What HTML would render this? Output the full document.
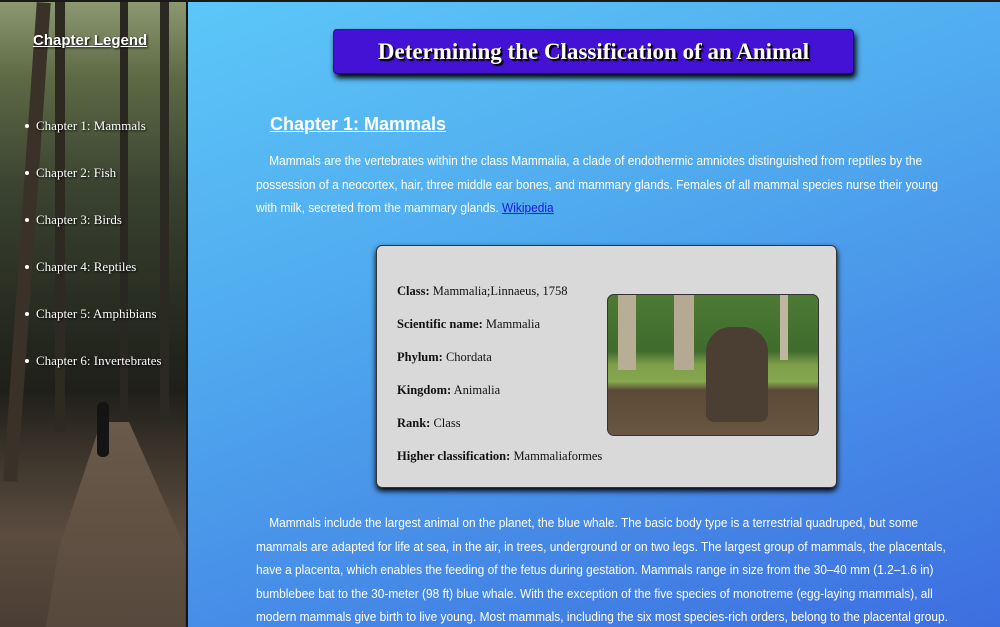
<!DOCTYPE html>
<html><head><meta charset="utf-8">
<style>
*{margin:0;padding:0;box-sizing:border-box}
html,body{width:1000px;height:627px;overflow:hidden}
body{background:linear-gradient(160deg,#5fcdfa 0%,#4fa8ee 45%,#3d6ee0 100%);font-family:"Liberation Sans",sans-serif;position:relative;border-top:2px solid #1a1a1a}
#side{position:absolute;left:0;top:0;width:188px;height:627px;border-right:2px solid #151515;overflow:hidden;
background:linear-gradient(180deg,#8c9870 0%,#5d6a45 12%,#3a4230 30%,#272b20 50%,#1f1f19 62%,#3c342b 72%,#5b4c3f 85%,#4a3d33 100%);}
.tr{position:absolute;top:0;background:#2a2520}
#side h3{position:absolute;left:33px;top:30px;color:#fff;font:bold 15px "Liberation Sans",sans-serif;text-decoration:underline;text-shadow:1px 1px 2px #000}
#side ul{position:absolute;left:24px;top:116px;list-style:none;color:#fff;font:13px "Liberation Serif",serif;text-shadow:1px 1px 2px #000}
#side li{height:47px;padding-left:12px;position:relative}
#side li:before{content:"";position:absolute;left:1px;top:6px;width:4px;height:4px;border-radius:50%;background:#fff}
#title{position:absolute;left:333px;top:27px;width:521px;height:45px;background:#4412d4;border:1px solid #22106a;border-radius:4px;box-shadow:2px 4px 6px #000;color:#fff;text-align:center;font:bold 23px/43px "Liberation Serif",serif;text-shadow:1px 1px 0 #000,2px 2px 1px #000}
h2{position:absolute;left:270px;top:112px;color:#fff;font:bold 18px "Liberation Sans",sans-serif;text-decoration:underline}
.p{position:absolute;left:256px;color:#fff;font-size:12.6px;line-height:23.5px;white-space:nowrap;transform:scaleX(0.945);transform-origin:0 0}
.p a{color:#1a1ae0}
#card{position:absolute;left:376px;top:243px;width:461px;height:243px;background:#d9d9d9;border:1px solid #333;border-radius:6px;box-shadow:0 3px 6px #000}
#card .t{position:absolute;left:20px;top:29px;font:12.5px "Liberation Serif",serif;color:#111;line-height:33px}
#img{position:absolute;left:230px;top:48px;width:212px;height:142px;border-radius:7px;border:1px solid #333;overflow:hidden;
background:linear-gradient(180deg,#4d7a34 0%,#3f6b2c 40%,#7ea04a 50%,#86a74d 62%,#5b4a37 68%,#6a5642 100%)}
</style></head><body>
<div id="side">
<div class="tr" style="left:20px;width:14px;height:480px;background:#3a3128;transform:rotate(4deg)"></div>
<div class="tr" style="left:55px;width:10px;height:430px;background:#2e2a22"></div>
<div class="tr" style="left:120px;width:8px;height:420px;background:#2a2620"></div>
<div class="tr" style="left:160px;width:9px;height:420px;background:#2c2822"></div>
<div style="position:absolute;left:45px;top:420px;width:140px;height:210px;background:linear-gradient(180deg,#6a5a4b,#56483c);clip-path:polygon(40% 0,60% 0,100% 60%,100% 100%,0 100%,10% 60%)"></div>
<div style="position:absolute;left:97px;top:400px;width:12px;height:55px;background:#141414;border-radius:5px"></div>
<h3>Chapter Legend</h3>
<ul><li>Chapter 1: Mammals</li><li>Chapter 2: Fish</li><li>Chapter 3: Birds</li><li>Chapter 4: Reptiles</li><li>Chapter 5: Amphibians</li><li>Chapter 6: Invertebrates</li></ul>
</div>
<div id="title">Determining the Classification of an Animal</div>
<h2>Chapter 1: Mammals</h2>
<div class="p" style="top:148px">&nbsp;&nbsp;&nbsp;&nbsp;Mammals are the vertebrates within the class Mammalia, a clade of endothermic amniotes distinguished from reptiles by the<br>possession of a neocortex, hair, three middle ear bones, and mammary glands. Females of all mammal species nurse their young<br>with milk, secreted from the mammary glands. <a href="#">Wikipedia</a></div>
<div id="card">
<div class="t"><b>Class:</b> Mammalia;Linnaeus, 1758<br><b>Scientific name:</b> Mammalia<br><b>Phylum:</b> Chordata<br><b>Kingdom:</b> Animalia<br><b>Rank:</b> Class<br><b>Higher classification:</b> Mammaliaformes</div>
<div id="img">
<div style="position:absolute;left:10px;top:0;width:18px;height:75px;background:#b8ad95"></div>
<div style="position:absolute;left:66px;top:0;width:20px;height:75px;background:#b5a993"></div>
<div style="position:absolute;left:172px;top:0;width:8px;height:65px;background:#c0b6a0"></div>
<div style="position:absolute;left:98px;top:32px;width:62px;height:95px;background:#4b3f34;border-radius:25px 25px 8px 8px"></div>
</div>
</div>
<div class="p" style="top:510px">&nbsp;&nbsp;&nbsp;&nbsp;Mammals include the largest animal on the planet, the blue whale. The basic body type is a terrestrial quadruped, but some<br>mammals are adapted for life at sea, in the air, in trees, underground or on two legs. The largest group of mammals, the placentals,<br>have a placenta, which enables the feeding of the fetus during gestation. Mammals range in size from the 30–40 mm (1.2–1.6 in)<br>bumblebee bat to the 30-meter (98 ft) blue whale. With the exception of the five species of monotreme (egg-laying mammals), all<br>modern mammals give birth to live young. Most mammals, including the six most species-rich orders, belong to the placental group.</div>
</body></html>
